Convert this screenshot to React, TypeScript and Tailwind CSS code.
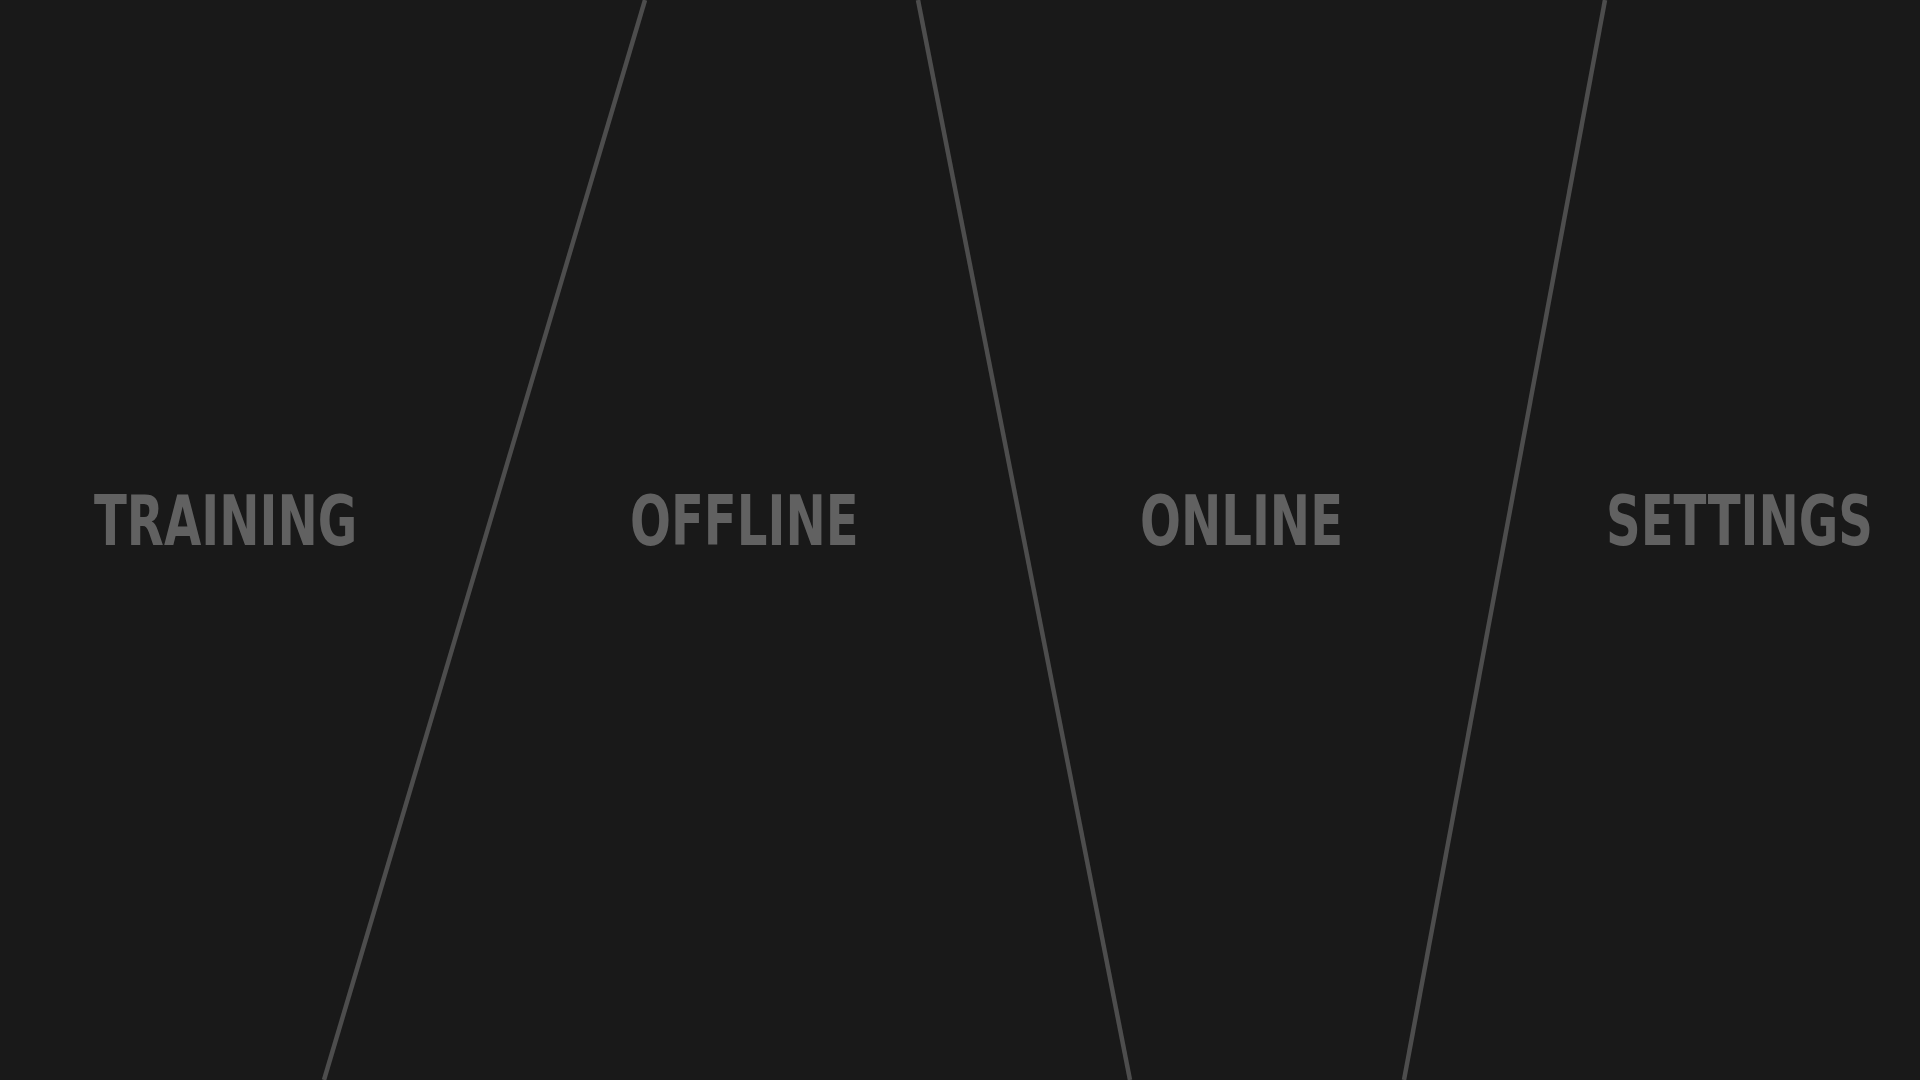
import React from "react";

const labels = [
  { text: "TRAINING", cls: "w-[630px] shrink-0 pl-[94px]" },
  { text: "OFFLINE", cls: "w-[510px] shrink-0" },
  { text: "ONLINE", cls: "w-[466px] shrink-0" },
  { text: "SETTINGS", cls: "flex-1" },
];

export default function App() {
  return (
    <div className="relative w-[1920px] h-[1080px] overflow-hidden bg-[#191919]">
      <svg className="absolute inset-0" width="1920" height="1080" viewBox="0 0 1920 1080">
        <line x1="645" y1="0" x2="324" y2="1080" stroke="#4d4d4d" strokeWidth="4.5" />
        <line x1="918" y1="0" x2="1130" y2="1080" stroke="#4d4d4d" strokeWidth="4.5" />
        <line x1="1605" y1="0" x2="1404" y2="1080" stroke="#4d4d4d" strokeWidth="4.5" />
      </svg>
      <div className="relative flex h-full items-center pb-[38px]">
        {labels.map((l) => (
          <div key={l.text} className={l.cls}>
            <span
              className="inline-block origin-left scale-x-[0.765] text-[70px] font-bold leading-none text-[#616161]"
              style={{ fontFamily: "'DejaVu Sans Condensed', 'DejaVu Sans', sans-serif" }}
            >
              {l.text}
            </span>
          </div>
        ))}
      </div>
    </div>
  );
}
